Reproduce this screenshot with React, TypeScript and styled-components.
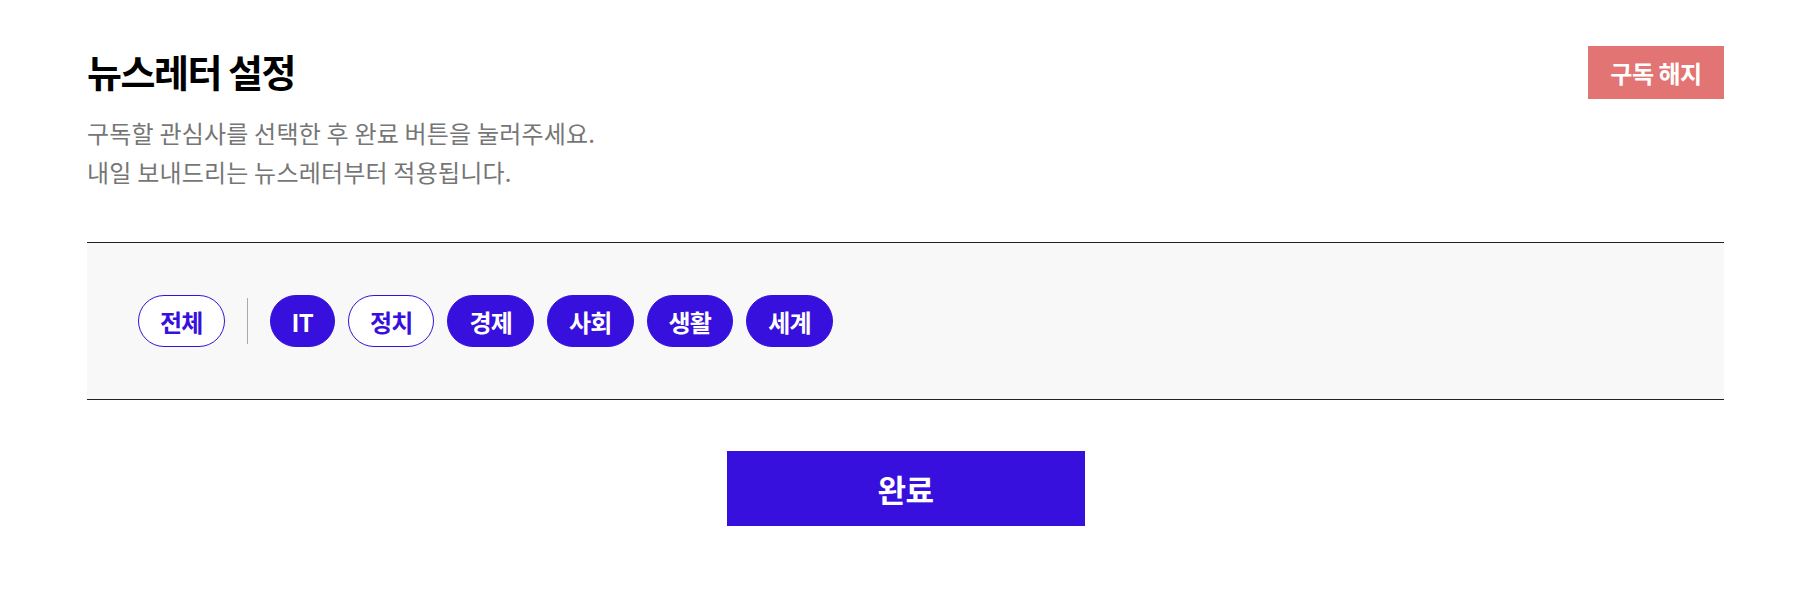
import React, { useState } from 'react'
import styled, { createGlobalStyle } from 'styled-components'

const GlobalStyle = createGlobalStyle`
    html, body {
        margin: 0;
        padding: 0;
        background: #ffffff;
    }
    body {
        font-family: "Noto Sans CJK KR", "Noto Sans", sans-serif;
        color: #111111;
    }
`

const Page = styled.main`
    padding: 46px 76px 70px 87px;
    display: flex;
    flex-direction: column;
`

const Header = styled.header`
    display: flex;
    justify-content: space-between;
    align-items: flex-start;
`

const HeaderText = styled.div`
    display: flex;
    flex-direction: column;
`

const Title = styled.h1`
    margin: 0;
    font-size: 38px;
    line-height: 50px;
    font-weight: 700;
    letter-spacing: -1.5px;
    color: #000000;
`

const Description = styled.p`
    margin: 17px 0 0 0;
    font-size: 24px;
    line-height: 39px;
    font-weight: 400;
    letter-spacing: 0.2px;
    color: #767676;
`

const UnsubscribeButton = styled.button`
    width: 136px;
    height: 53px;
    border: none;
    background: #e37474;
    color: #ffffff;
    font-family: inherit;
    font-size: 24px;
    font-weight: 700;
    letter-spacing: -0.5px;
    cursor: pointer;
`

const TopicPanel = styled.section`
    margin-top: 51px;
    padding: 52px 51px 52px 51px;
    background: #f8f8f8;
    border-top: 1px solid #222222;
    border-bottom: 1px solid #222222;
    display: flex;
    align-items: center;
`

const Divider = styled.span`
    width: 1px;
    height: 46px;
    background: #aaaaaa;
    margin: 0 22px;
`

const ChipList = styled.div`
    display: flex;
    gap: 13px;
`

const Chip = styled.button<{ $active: boolean }>`
    height: 52px;
    padding: 0 21px;
    border-radius: 26px;
    border: 1px solid #3710de;
    background: ${p => (p.$active ? '#3710de' : '#ffffff')};
    color: ${p => (p.$active ? '#ffffff' : '#3710de')};
    font-family: inherit;
    font-size: 24px;
    font-weight: 700;
    letter-spacing: -0.8px;
    cursor: pointer;
`

const Footer = styled.div`
    display: flex;
    justify-content: center;
    margin-top: 51px;
`

const DoneButton = styled.button`
    width: 358px;
    height: 75px;
    border: none;
    background: #3710de;
    color: #ffffff;
    font-family: inherit;
    font-size: 31px;
    font-weight: 700;
    letter-spacing: -0.5px;
    cursor: pointer;
`

const TOPICS = ['IT', '정치', '경제', '사회', '생활', '세계']

const App = () => {
  const [selected, setSelected] = useState<string[]>(['IT', '경제', '사회', '생활', '세계'])
  const allSelected = selected.length === TOPICS.length

  const toggle = (topic: string) => {
    setSelected(prev => (prev.includes(topic) ? prev.filter(t => t !== topic) : [...prev, topic]))
  }

  return (
    <>
      <GlobalStyle />
      <Page>
        <Header>
          <HeaderText>
            <Title>뉴스레터 설정</Title>
            <Description>
              구독할 관심사를 선택한 후 완료 버튼을 눌러주세요.
              <br />
              내일 보내드리는 뉴스레터부터 적용됩니다.
            </Description>
          </HeaderText>
          <UnsubscribeButton>구독 해지</UnsubscribeButton>
        </Header>

        <TopicPanel>
          <Chip $active={allSelected} onClick={() => setSelected(allSelected ? [] : TOPICS)}>
            전체
          </Chip>
          <Divider />
          <ChipList>
            {TOPICS.map(topic => (
              <Chip key={topic} $active={selected.includes(topic)} onClick={() => toggle(topic)}>
                {topic}
              </Chip>
            ))}
          </ChipList>
        </TopicPanel>

        <Footer>
          <DoneButton>완료</DoneButton>
        </Footer>
      </Page>
    </>
  )
}

export default App
